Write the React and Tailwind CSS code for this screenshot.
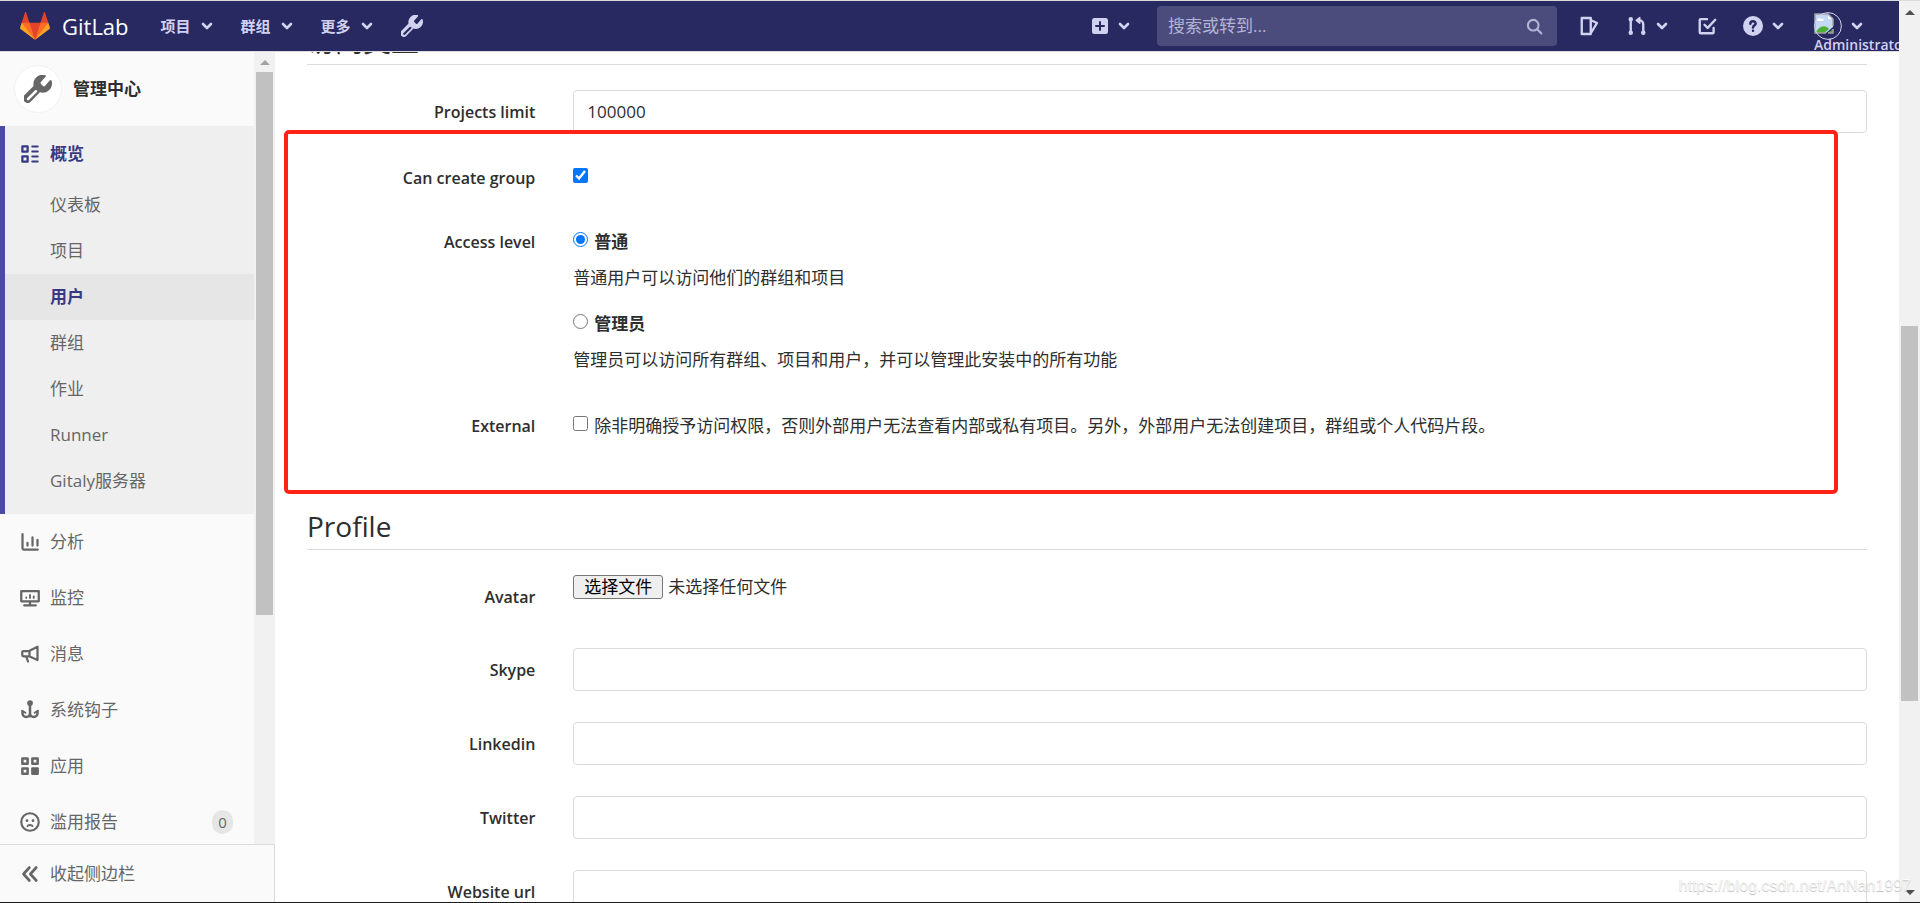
import React, { useRef, useState } from 'react';

const sans = "font-['Open_Sans','Noto_Sans_CJK_SC',sans-serif]";

const subItems = ['仪表板', '项目', '用户', '群组', '作业', 'Runner', 'Gitaly服务器'];

const Svg = ({ className = 'size-5', children }) => (
  <svg viewBox="0 0 16 16" className={`${className} shrink-0`} fill="none" stroke="currentColor" strokeWidth="2" strokeLinecap="round" strokeLinejoin="round" aria-hidden="true">
    {children}
  </svg>
);

const Chevron = () => (
  <svg viewBox="0 0 12 8" className="w-3 h-2 shrink-0" fill="none" stroke="currentColor" strokeWidth="2.6" strokeLinecap="round" strokeLinejoin="round" aria-hidden="true">
    <path d="M2 2l4 4 4-4" />
  </svg>
);

const Wrench = ({ className }) => (
  <svg viewBox="2 1 21 21" className={`${className} shrink-0`} fill="currentColor" fillRule="evenodd" aria-hidden="true">
    <path d="M14.7 6.3a1 1 0 0 0 0 1.4l1.6 1.6a1 1 0 0 0 1.4 0l3.6-4.2a1 1 0 0 1 1.5.6 7 7 0 0 1-8.9 8.3l-6.9 7a3.4 3.4 0 0 1-4.8-4.8l7-7a7 7 0 0 1 8.3-8.3 1 1 0 0 1 .6 1.5zM4.3 18.4a1 1 0 0 0 1.4 1.4l6-6a1 1 0 0 0-1.4-1.4z" />
  </svg>
);

const Logo = () => (
  <svg viewBox="0 0 36 36" className="size-[30px] shrink-0" aria-hidden="true">
    <path fill="#e24329" d="M2 14l9.38 9v-9l-4-12.28c-.205-.632-1.176-.632-1.38 0z" />
    <path fill="#e24329" d="M34 14l-9.38 9v-9l4-12.28c.205-.632 1.176-.632 1.38 0z" />
    <path fill="#e24329" d="M18 34.38L3 14h30z" />
    <path fill="#fc6d26" d="M18 34.38L11.38 14H2l4 11z" />
    <path fill="#fc6d26" d="M18 34.38L24.62 14H34l-4 11z" />
    <path fill="#fca326" d="M2 14L.1 20.16c-.18.565 0 1.2.5 1.56l17.42 12.66z" />
    <path fill="#fca326" d="M34 14l1.9 6.16c.18.565 0 1.2-.5 1.56L18 34.38z" />
  </svg>
);

const OverviewIcon = () => (
  <Svg>
    <rect x="1.9" y="1.9" width="4.2" height="4.2" strokeWidth="1.8" />
    <rect x="1.9" y="9.9" width="4.2" height="4.2" strokeWidth="1.8" />
    <path strokeWidth="1.6" d="M9.8 2h4.4M9.8 6h4.4M9.8 10h4.4M9.8 14h4.4" />
  </Svg>
);

const navItems = [
  {
    label: '分析',
    icon: <Svg><path strokeWidth="1.8" d="M2 1.6V13a1 1 0 0 0 1 1h11.2M6 8.6v2.2M10 4.2v6.6M14 6.2v4.6" /></Svg>,
  },
  {
    label: '监控',
    icon: <Svg><path strokeWidth="1.8" d="M1 2.4h14v8.2H1zM3.4 13.9h9.2M8 10.6v3.3" /><path strokeWidth="1.5" d="M5 7.6v.3M8 5.6v2.3M11 6.8v1.1" /></Svg>,
  },
  {
    label: '消息',
    icon: <Svg><path strokeWidth="1.8" d="M2.8 5.6h4.4L14 2.2v10.6L7.2 9.8H2.8a1 1 0 0 1-1-1V6.6a1 1 0 0 1 1-1zM7.6 5.8v3.9M5 10l1.4 4" /></Svg>,
  },
  {
    label: '系统钩子',
    icon: <Svg><circle cx="8" cy="2.4" r="1.3" fill="currentColor" /><path d="M8 3.6V13M2 9.4v1.2a3 3 0 0 0 6 0 3 3 0 0 0 6 0V9.4" /><path strokeWidth="1.6" d="M1.7 8.6l2.6 1.6M14.3 8.6l-2.6 1.6" /></Svg>,
  },
  {
    label: '应用',
    icon: (
      <Svg>
        <rect x="1.9" y="1.9" width="4.2" height="4.2" />
        <rect x="9.9" y="1.9" width="4.2" height="4.2" />
        <rect x="1.9" y="9.9" width="4.2" height="4.2" />
        <rect x="9.9" y="9.9" width="4.2" height="4.2" fill="currentColor" />
      </Svg>
    ),
  },
  {
    label: '滥用报告',
    count: 0,
    icon: <Svg><circle cx="8" cy="8" r="7" strokeWidth="1.7" /><path strokeWidth="1.5" d="M6 11.3c.5-1.2 3.5-1.2 4 0" /><path strokeWidth="2.2" d="M5.6 6.9h.01M10.4 6.9h.01" /></Svg>,
  },
];

function Header() {
  return (
    <header className="h-[52px] shrink-0 flex items-center bg-[#292961] border-y border-[#dbdbdb] pl-5 text-[#d1d1f0] overflow-hidden">
      <a href="#home" className="flex items-center gap-3 text-white text-[22px]">
        <Logo />
        GitLab
      </a>
      <nav className="flex items-center gap-7 ml-8 text-[15px] font-bold">
        {['项目', '群组', '更多'].map((label) => (
          <button key={label} type="button" className="flex items-center gap-[10px]">
            {label}
            <Chevron />
          </button>
        ))}
        <a href="#admin" aria-label="管理中心"><Wrench className="size-[22px]" /></a>
      </nav>

      <div className="ml-auto flex items-center shrink-0">
        <button type="button" aria-label="新建" className="flex items-center gap-[10px] mr-[27px]">
          <svg viewBox="0 0 16 16" className="size-4" fill="currentColor" fillRule="evenodd" aria-hidden="true">
            <path d="M2.5 0h11A2.5 2.5 0 0 1 16 2.5v11a2.5 2.5 0 0 1-2.5 2.5h-11A2.5 2.5 0 0 1 0 13.5v-11A2.5 2.5 0 0 1 2.5 0zM7 4v3H4a1 1 0 0 0 0 2h3v3a1 1 0 0 0 2 0V9h3a1 1 0 0 0 0-2H9V4a1 1 0 0 0-2 0z" />
          </svg>
          <Chevron />
        </button>
        <div className="flex items-center w-[400px] h-10 rounded bg-[#4c4c7c] pl-[11px] pr-[14px] text-[#b4b3d6]">
          <input type="search" aria-label="搜索" placeholder="搜索或转到..." className="flex-1 min-w-0 bg-transparent text-[17px] outline-none placeholder:text-[#b4b3d6]" />
          <Svg className="size-[17px]"><circle cx="6.8" cy="6.8" r="5" /><path d="M10.8 10.8l3.7 3.7" /></Svg>
        </div>
        <a href="#issues" aria-label="议题" className="ml-[22px]">
          <Svg><path strokeWidth="1.9" d="M2.2 1.6h7.2v12.8H2.2zM9.6 3.4l4.8 2.2-4.6 7.6" /></Svg>
        </a>
        <button type="button" aria-label="合并请求" className="ml-7 flex items-center gap-[9px]">
          <Svg>
            <path strokeWidth="1.9" d="M3 3v10M13 13V6.5a3 3 0 0 0-3-3" />
            <path strokeWidth="1.2" fill="currentColor" d="M10.2 1.2v4.6L7.4 3.5z" />
            <path strokeWidth="3.6" d="M3 2.6h.01M3 13.4h.01M13 13.4h.01" />
          </Svg>
          <Chevron />
        </button>
        <a href="#todos" aria-label="待办事项" className="ml-[29px]">
          <Svg><path strokeWidth="1.9" d="M8 2.5H3a.8.8 0 0 0-.8.8V13a.8.8 0 0 0 .8.8h9.5a.8.8 0 0 0 .8-.8V9.5M6 7l2.5 2.5L14.6 3" /></Svg>
        </a>
        <button type="button" aria-label="帮助" className="ml-[26px] flex items-center gap-[9px]">
          <svg viewBox="0 0 16 16" className="size-5" aria-hidden="true">
            <circle cx="8" cy="8" r="8" fill="currentColor" />
            <path d="M5.9 6.2c.1-2.7 4.3-2.5 4.2 0 0 1.3-2 1.3-2.1 3M8 11.8h.01" fill="none" stroke="#292961" strokeWidth="2" strokeLinecap="round" />
          </svg>
          <Chevron />
        </button>
        <button type="button" className="relative ml-[30px] mr-9 flex items-center gap-[9px]">
          <svg viewBox="0 0 28 28" className="size-7" aria-hidden="true">
            <path d="M1 2h13l5 5v8l-7 6H1z" fill="#c3d9f6" />
            <path d="M3 8c0-2 3-3 4-1 2-1 4 1 2 2H3z" fill="#fff" />
            <path d="M2 20c3-6 9-8 13-3l-5 4H2z" fill="#4fae35" />
            <path d="M14 2v5h5z" fill="#fff" />
            <path d="M19 17v4h-5z" fill="#4fae35" />
            <path d="M12 21H1V2h13l5 5v7M19 17v4h-5" fill="none" stroke="#a3a3a3" strokeWidth="1.5" />
            <circle cx="14" cy="14" r="13.4" fill="none" stroke="#d1d1f0" />
          </svg>
          <Chevron />
          <span className="absolute left-0 top-[23px] text-[14px] leading-5 font-semibold">Administrator</span>
        </button>
      </div>
    </header>
  );
}

function Sidebar() {
  return (
    <aside className="w-[275px] shrink-0 flex flex-col bg-[#fafafa] text-[17px] text-[#666]">
      <div className="flex-1 min-h-0 flex">
        <div className="flex-1 overflow-hidden">
          <a href="#admin" className="h-[74px] flex items-center gap-[11px] pl-[14px] font-bold text-[#2e2e2e]">
            <span className="size-12 rounded-full bg-white border border-[#f2f2f2] flex items-center justify-center text-[#666]">
              <Wrench className="size-7" />
            </span>
            管理中心
          </a>
          <div className="bg-[#efefef] border-l-[5px] border-[#4b4ba3] pb-[10px]">
            <a href="#overview" className="h-14 flex items-center gap-[10px] pl-[15px] font-bold text-[#393982]">
              <OverviewIcon />
              概览
            </a>
            <ul>
              {subItems.map((label) => (
                <li key={label}>
                  <a
                    href="#sub"
                    className={`h-[46px] flex items-center pl-[45px] ${label === '用户' ? 'bg-[#e6e6e6] font-bold text-[#393982]' : ''}`}
                  >
                    {label}
                  </a>
                </li>
              ))}
            </ul>
          </div>
          <ul>
            {navItems.map(({ label, icon, count }) => (
              <li key={label}>
                <a href="#nav" className="h-14 flex items-center gap-[10px] pl-5 pr-[21px]">
                  {icon}
                  {label}
                  {count !== undefined && (
                    <span className="ml-auto h-6 w-[21px] rounded-full bg-[#e6e6e6] text-[15px] flex items-center justify-center">{count}</span>
                  )}
                </a>
              </li>
            ))}
          </ul>
        </div>
        <div className="w-[21px] bg-[#f1f1f1] flex flex-col items-center">
          <svg viewBox="0 0 10 5" className="w-[10px] h-[5px] mt-2 mb-[7px]" aria-hidden="true"><path d="M0 5l5-5 5 5z" fill="#a3a3a3" /></svg>
          <div className="w-[17px] flex-[543] bg-[#c1c1c1]" />
          <div className="flex-[229]" />
        </div>
      </div>
      <button type="button" className="h-[58px] shrink-0 flex items-center gap-[10px] pl-5 border-t border-r border-[#dbdbdb]">
        <Svg><path strokeWidth="2.1" d="M7.5 2.8L2.8 8l4.7 5.2M13 2.8L8.3 8l4.7 5.2" /></Svg>
        收起侧边栏
      </button>
    </aside>
  );
}

function Row({ label, id, padded = true, className = '', children }) {
  return (
    <div className={`flex -mx-[19px] mb-[31px] ${className}`}>
      <label htmlFor={id} className={`w-1/6 shrink-0 px-[19px] text-right text-[16px] font-semibold leading-7 ${padded ? 'pt-2' : ''}`}>
        {label}
      </label>
      <div className="flex-1 min-w-0 px-[19px]">{children}</div>
    </div>
  );
}

const Heading = ({ className, children }) => (
  <h2 className={`text-[28px] leading-9 pb-[5px] mb-[25px] border-b border-[#dbdbdb] ${className}`}>{children}</h2>
);

const TextInput = (props) => (
  <input type="text" className="block w-full h-[43px] rounded border border-[#dbdbdb] bg-white px-[13px] outline-none" {...props} />
);

const levels = [
  { id: 'regular', name: '普通', help: '普通用户可以访问他们的群组和项目' },
  { id: 'admin', name: '管理员', help: '管理员可以访问所有群组、项目和用户，并可以管理此安装中的所有功能' },
];

function UserForm() {
  const [level, setLevel] = useState('regular');
  const fileRef = useRef(null);

  return (
    <main className="relative flex-1 min-w-0 overflow-hidden px-8 bg-white">
      <Heading className="-mt-[29px]">访问类型</Heading>
      <Row label="Projects limit" id="limit">
        <TextInput id="limit" defaultValue="100000" />
      </Row>
      <Row label="Can create group" id="group" padded={false} className="h-[33px]">
        <input id="group" type="checkbox" defaultChecked className="block size-[15px] mt-1" />
      </Row>
      <Row label="Access level" id="regular" padded={false}>
        <div className="flex flex-col gap-[18px] pb-[7px]">
          {levels.map(({ id, name, help }) => (
            <div key={id}>
              <div className="flex gap-[6px] leading-7">
                <input id={id} type="radio" name="level" checked={level === id} onChange={() => setLevel(id)} className="size-[15px] mt-1" />
                <label htmlFor={id} className="font-bold">{name}</label>
              </div>
              <p className="leading-7 mt-2">{help}</p>
            </div>
          ))}
        </div>
      </Row>
      <Row label="External" id="external" padded={false} className="h-[33px]">
        <div className="flex gap-[6px] leading-7">
          <input id="external" type="checkbox" className="size-[15px] mt-1 shrink-0" />
          <label htmlFor="external">除非明确授予访问权限，否则外部用户无法查看内部或私有项目。另外，外部用户无法创建项目，群组或个人代码片段。</label>
        </div>
      </Row>

      <Heading className="mt-[63px]">Profile</Heading>
      <Row label="Avatar" id="avatar" className="h-[42px]">
        <div className="flex items-center gap-[5px] leading-6">
          <button type="button" onClick={() => fileRef.current?.click()} className="h-6 px-[10px] rounded-[3px] border border-[#767676] bg-[#efefef] text-black leading-[22px]">
            选择文件
          </button>
          <span>未选择任何文件</span>
          <input ref={fileRef} id="avatar" type="file" className="hidden" />
        </div>
      </Row>
      {['Skype', 'Linkedin', 'Twitter', 'Website url'].map((name) => (
        <Row key={name} label={name} id={name}>
          <TextInput id={name} />
        </Row>
      ))}

      {/* highlight frame over the access settings */}
      <div className="absolute left-[9px] right-[61px] top-[78px] h-[364px] rounded-[5px] border-4 border-[#ff2216] pointer-events-none" />
    </main>
  );
}

function App() {
  return (
    <div className={`${sans} relative h-screen flex overflow-hidden border-b border-[#1a1a1a] bg-white text-[17px] text-[#2e2e2e]`}>
      <div className="flex-1 min-w-0 flex flex-col">
        <Header />
        <div className="flex-1 min-h-0 flex">
          <Sidebar />
          <UserForm />
        </div>
      </div>
      <div className="w-[21px] shrink-0 bg-[#f1f1f1] border-t border-[#dbdbdb] flex flex-col items-center">
        <svg viewBox="0 0 10 5" className="w-[10px] h-[5px] mt-[9px]" aria-hidden="true"><path d="M0 5l5-5 5 5z" fill="#505050" /></svg>
        <div className="flex-[311]" />
        <div className="w-[17px] flex-[375] bg-[#c1c1c1]" />
        <div className="flex-[189]" />
        <svg viewBox="0 0 10 5" className="w-[10px] h-[5px] mb-[7px]" aria-hidden="true"><path d="M0 0l5 5 5-5z" fill="#505050" /></svg>
      </div>
      <span className="absolute right-[9px] bottom-1 font-['Liberation_Sans',sans-serif] text-[16px] text-white/80 [text-shadow:0_1px_1px_#bbb] pointer-events-none">
        https://blog.csdn.net/AnNan1997
      </span>
    </div>
  );
}

export default App;
